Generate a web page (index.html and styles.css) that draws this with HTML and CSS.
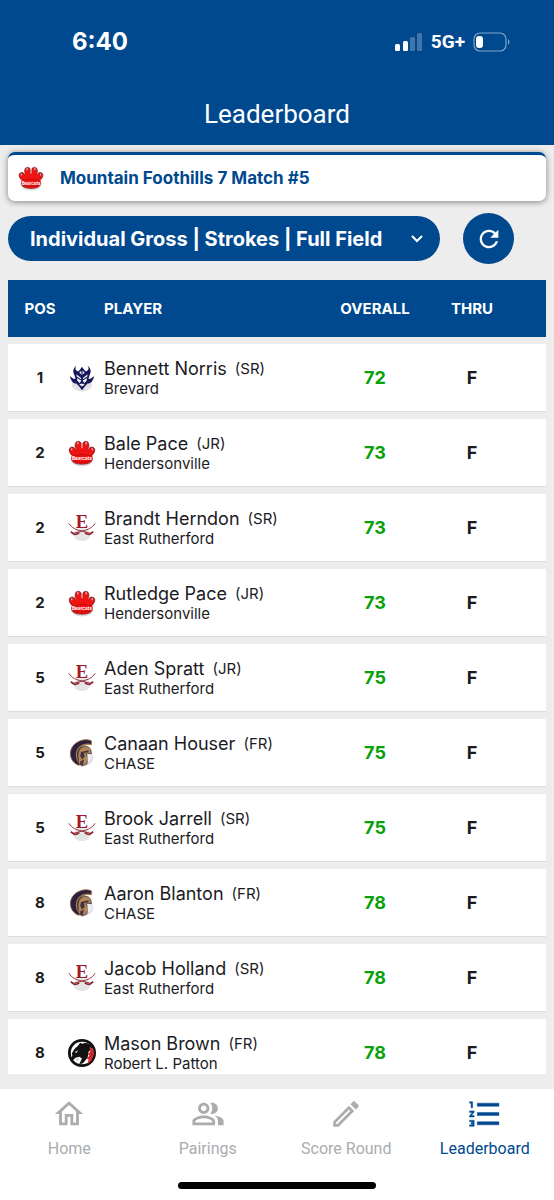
FILE: index.html
```html
<!DOCTYPE html>
<html lang="en">
<head>
    <meta charset="UTF-8">
    <meta name="viewport" content="width=device-width, initial-scale=1.0">
    <title>Leaderboard</title>
    <link rel="stylesheet" href="styles.css">
</head>
<body>
    <!-- team logos -->
    <svg class="sprite" aria-hidden="true">
        <symbol id="bearcats" viewBox="0 0 30 30">
            <ellipse cx="15" cy="22" rx="12" ry="7.500" fill="#dcdcde"/>
            <g fill="#f01313" stroke="#5a2020" stroke-width=".7">
                <ellipse cx="5" cy="13" rx="3.400" ry="4.500" transform="rotate(-20 5 13)"/>
                <ellipse cx="11" cy="7" rx="3.400" ry="4.500"/>
                <ellipse cx="19" cy="7" rx="3.400" ry="4.500"/>
                <ellipse cx="25" cy="13" rx="3.400" ry="4.500" transform="rotate(20 25 13)"/>
            </g>
            <path fill="#f01313" d="M15 6c5 0 7 4 8 8 3 2 4 5 3 8-1 4-6 5-11 5S5 26 4 22c-1-3 0-6 3-8 1-4 3-8 8-8z"/>
            <path d="M4 20c-1 5 4 7 11 7s12-2 11-7" fill="none" stroke="#7a1515" stroke-width=".7"/>
            <path d="M10.500 3v3M15 5v5M19.500 3v3M4 10v2M26 10v2" stroke="#cfc2c2" stroke-width="1.300"/>
            <path d="M5 18q10-3 20 0M6 24q9 2 18 0" fill="none" stroke="#a30b0b" stroke-width=".7"/>
            <text x="15" y="22.500" class="paw-text">Bearcats</text>
        </symbol>
        <symbol id="devils" viewBox="0 0 30 30">
            <ellipse cx="15" cy="22" rx="11" ry="7.500" fill="#e2e2e4"/>
            <path fill="#161657" d="M9 2c-2 3-1 5 2 6l2-2 2-3 2 3 2 2c3-1 4-3 2-6 4 3 4 7 2 10l-1 4c3 0 4-2 6-3-1 4-3 8-7 8l-3 3-3 4-3-4-3-3c-4 0-6-4-7-8 2 1 3 3 6 3l-1-4C5 9 5 5 9 2z"/>
            <path fill="#eceef8" d="M9 11l5 4v3l-1 3-3-3zM21 11l-5 4v3l1 3 3-3zM12 9l3-2 3 2-3 3zM12 22l3-1 3 1-3 2z"/>
            <path fill="none" stroke="#161657" stroke-width="1.200" d="M9 14l5 3M21 14l-5 3M15 7v5M13 20h4"/>
        </symbol>
        <symbol id="cavaliers" viewBox="0 0 30 30">
            <ellipse cx="15" cy="22" rx="9" ry="7" fill="#e4e4e5"/>
            <g fill="none" stroke="#8e2430">
                <path d="M1 10c3 5 8 7 13 8l11 3" stroke-width="1"/>
                <path d="M29 10c-3 5-8 7-13 8L5 21" stroke-width="1"/>
                <path d="M3 19l4 3q3 0 5-2M27 19l-4 3q-3 0-5-2" stroke-width="1.800"/>
            </g>
            <text x="15" y="15" class="cav-text">E</text>
        </symbol>
        <symbol id="trojans" viewBox="0 0 30 30">
            <ellipse cx="18" cy="20" rx="9" ry="8" fill="#dcdce3"/>
            <path fill="#2d1d3f" stroke="#8b693e" stroke-width="1" d="M25 2C19-1 9 2 5 8 0 15 3 25 11 28l3-1c-4-5-4-10-2-15 2-4 6-7 13-6z"/>
            <path fill="none" stroke="#a5804c" stroke-width="1.300" d="M25 6C15 4 9 10 9 17q0 6 4 10"/>
            <path fill="#b18a56" stroke="#382632" stroke-width=".8" d="M11 20c-1-7 2-12 8-12 4 0 6 3 6 8l-5-1v3l2 1-2 8-5 2-4-3z"/>
            <path fill="#463142" d="M14 14l8-2v2l-5 1 1 4-3 3-2-4zM13 24l4-2-1 6-3-1z"/>
            <path fill="#ececf2" d="M21 17l4-1 1 4-3 5-2-1z"/>
        </symbol>
        <symbol id="panthers" viewBox="0 0 30 30">
            <circle cx="15" cy="15" r="15" fill="#111"/>
            <circle cx="15" cy="15" r="12" fill="#fff"/>
            <path fill="#111" d="M4 16c1-3 3-6 6-8l3-4 2 1c5-2 9 0 11 4l-4 5-1 6-5 6-4 1 3-6-3-2-4 1-3 3-2-3c2-1 2-3 1-4z"/>
            <path fill="#d8d8d8" d="M7 14l4-2-2 3zM8 22l3-2 1 2-2 2z"/>
            <path fill="#e22b30" d="M23 8l4 3 1 5-3 7-4 4 1-5-2-1 3-3-2-2 3-2z"/>
            <path fill="none" stroke="#901e21" stroke-width="1" d="M25 12l-1 3 2 1-3 4 1 1"/>
        </symbol>
    </svg>

    <div class="app">
        <header class="header">
            <div class="status-bar">
                <span class="time">6:40</span>
                <div class="status-icons">
                    <svg width="28" height="20" viewBox="0 0 28 20" fill="#fff">
                        <rect x="0" y="12" width="5" height="7" rx="1.500"/>
                        <rect x="8" y="9" width="5" height="10" rx="1.500"/>
                        <rect x="15" y="5" width="5" height="14" rx="1.500" opacity=".25"/>
                        <rect x="22" y="1" width="5" height="18" rx="1.500" opacity=".25"/>
                    </svg>
                    <span class="network">5G+</span>
                    <svg width="37" height="20" viewBox="0 0 37 20">
                        <rect x="1" y="1" width="32" height="18" rx="6" fill="none" stroke="#7fa3cb" stroke-width="1.200"/>
                        <rect x="3" y="4" width="7" height="12" rx="3" fill="#fff"/>
                        <path d="M35 7q3 3 0 6z" fill="#7fa3cb"/>
                    </svg>
                </div>
            </div>
            <h1 class="title">Leaderboard</h1>
        </header>

        <main class="content">
            <div class="match-card">
                <svg class="match-logo"><use href="#bearcats"/></svg>
                <h2 class="match-name">Mountain Foothills 7 Match #5</h2>
            </div>

            <div class="controls">
                <div class="filter">
                    <select aria-label="Leaderboard type">
                        <option>Individual Gross | Strokes | Full Field</option>
                    </select>
                    <svg class="chevron" width="12" height="8" viewBox="0 0 12 8" fill="none" stroke="#fff" stroke-width="2"><path d="M1 1l5 5 5-5"/></svg>
                </div>
                <button class="refresh" aria-label="Refresh">
                    <svg width="28" height="28" viewBox="0 0 24 24" fill="#fff"><path d="M17.650 6.350C16.200 4.900 14.210 4 12 4c-4.420 0-7.990 3.580-7.990 8s3.570 8 7.990 8c3.730 0 6.840-2.550 7.730-6h-2.080c-.82 2.330-3.040 4-5.650 4-3.310 0-6-2.690-6-6s2.690-6 6-6c1.660 0 3.140.69 4.220 1.780L13 11h7V4l-2.350 2.350z"/></svg>
                </button>
            </div>

            <div class="board">
                <table>
                    <thead>
                        <tr>
                            <th class="pos">POS</th>
                            <th class="logo"></th>
                            <th class="player">PLAYER</th>
                            <th class="overall">OVERALL</th>
                            <th class="thru">THRU</th>
                            <th class="end"></th>
                        </tr>
                    </thead>
                    <tbody>
                        <tr>
                            <td class="pos">1</td>
                            <td class="logo"><svg><use href="#devils"/></svg></td>
                            <td class="player"><div class="name">Bennett Norris <span>(SR)</span></div><div class="school">Brevard</div></td>
                            <td class="overall">72</td>
                            <td class="thru">F</td>
                            <td class="end"></td>
                        </tr>
                        <tr>
                            <td class="pos">2</td>
                            <td class="logo"><svg><use href="#bearcats"/></svg></td>
                            <td class="player"><div class="name">Bale Pace <span>(JR)</span></div><div class="school">Hendersonville</div></td>
                            <td class="overall">73</td>
                            <td class="thru">F</td>
                            <td class="end"></td>
                        </tr>
                        <tr>
                            <td class="pos">2</td>
                            <td class="logo"><svg><use href="#cavaliers"/></svg></td>
                            <td class="player"><div class="name">Brandt Herndon <span>(SR)</span></div><div class="school">East Rutherford</div></td>
                            <td class="overall">73</td>
                            <td class="thru">F</td>
                            <td class="end"></td>
                        </tr>
                        <tr>
                            <td class="pos">2</td>
                            <td class="logo"><svg><use href="#bearcats"/></svg></td>
                            <td class="player"><div class="name">Rutledge Pace <span>(JR)</span></div><div class="school">Hendersonville</div></td>
                            <td class="overall">73</td>
                            <td class="thru">F</td>
                            <td class="end"></td>
                        </tr>
                        <tr>
                            <td class="pos">5</td>
                            <td class="logo"><svg><use href="#cavaliers"/></svg></td>
                            <td class="player"><div class="name">Aden Spratt <span>(JR)</span></div><div class="school">East Rutherford</div></td>
                            <td class="overall">75</td>
                            <td class="thru">F</td>
                            <td class="end"></td>
                        </tr>
                        <tr>
                            <td class="pos">5</td>
                            <td class="logo"><svg><use href="#trojans"/></svg></td>
                            <td class="player"><div class="name">Canaan Houser <span>(FR)</span></div><div class="school">CHASE</div></td>
                            <td class="overall">75</td>
                            <td class="thru">F</td>
                            <td class="end"></td>
                        </tr>
                        <tr>
                            <td class="pos">5</td>
                            <td class="logo"><svg><use href="#cavaliers"/></svg></td>
                            <td class="player"><div class="name">Brook Jarrell <span>(SR)</span></div><div class="school">East Rutherford</div></td>
                            <td class="overall">75</td>
                            <td class="thru">F</td>
                            <td class="end"></td>
                        </tr>
                        <tr>
                            <td class="pos">8</td>
                            <td class="logo"><svg><use href="#trojans"/></svg></td>
                            <td class="player"><div class="name">Aaron Blanton <span>(FR)</span></div><div class="school">CHASE</div></td>
                            <td class="overall">78</td>
                            <td class="thru">F</td>
                            <td class="end"></td>
                        </tr>
                        <tr>
                            <td class="pos">8</td>
                            <td class="logo"><svg><use href="#cavaliers"/></svg></td>
                            <td class="player"><div class="name">Jacob Holland <span>(SR)</span></div><div class="school">East Rutherford</div></td>
                            <td class="overall">78</td>
                            <td class="thru">F</td>
                            <td class="end"></td>
                        </tr>
                        <tr>
                            <td class="pos">8</td>
                            <td class="logo"><svg><use href="#panthers"/></svg></td>
                            <td class="player"><div class="name">Mason Brown <span>(FR)</span></div><div class="school">Robert L. Patton</div></td>
                            <td class="overall">78</td>
                            <td class="thru">F</td>
                            <td class="end"></td>
                        </tr>
                    </tbody>
                </table>
            </div>
        </main>

        <footer class="footer">
            <nav class="tabs">
                <a href="#home">
                    <svg viewBox="0 0 24 24"><path d="M12 5.690l5 4.500V18h-2v-6H9v6H7v-7.810l5-4.500M12 3L2 12h3v8h6v-6h2v6h6v-8h3L12 3z"/></svg>
                    Home
                </a>
                <a href="#pairings">
                    <svg viewBox="0 0 24 24"><path d="M16.670 13.130C18.040 14.060 19 15.320 19 17v3h4v-3c0-2.180-3.570-3.470-6.330-3.870zM15 12c2.210 0 4-1.790 4-4s-1.790-4-4-4c-.47 0-.91.1-1.330.24C14.500 5.270 15 6.580 15 8s-.5 2.730-1.330 3.760c.42.14.86.24 1.330.24zM9 12c2.210 0 4-1.790 4-4s-1.790-4-4-4-4 1.790-4 4 1.790 4 4 4zm0-6c1.100 0 2 .9 2 2s-.9 2-2 2-2-.9-2-2 .9-2 2-2zm0 7c-2.670 0-8 1.340-8 4v3h16v-3c0-2.660-5.330-4-8-4zm6 5H3v-.99C3.200 16.290 6.300 15 9 15s5.800 1.290 6 2v1z"/></svg>
                    Pairings
                </a>
                <a href="#score">
                    <svg viewBox="0 0 24 24"><path d="M14.060 9.020l.92.92L5.920 19H5v-.92l9.060-9.060M17.660 3c-.25 0-.51.1-.7.29l-1.830 1.830 3.750 3.750 1.830-1.830c.39-.39.39-1.020 0-1.410l-2.340-2.340c-.2-.2-.45-.29-.71-.29zm-3.600 3.190L3 17.250V21h3.750L17.810 9.940l-3.750-3.750z"/></svg>
                    Score Round
                </a>
                <a href="#leaderboard" class="active">
                    <svg viewBox="1 1 22 22"><path stroke="currentColor" stroke-width=".3" d="M2 17h2v.5H3v1h1v.5H2v1h3v-4H2v1zm1-9h1V4H2v1h1v3zm-1 3h1.800L2 13.100v.9h3v-1H3.200L5 10.900V10H2v1zm5-6v2h14V5H7zm0 14h14v-2H7v2zm0-6h14v-2H7v2z"/></svg>
                    Leaderboard
                </a>
            </nav>
            <div class="home-bar"></div>
        </footer>
    </div>
</body>
</html>
```
FILE: styles.css
```css
* {
    box-sizing: border-box;
}
body {
    margin: 0;
    background: #ededed;
    color: #1b1b1f;
    font-family: Inter, "Liberation Sans", sans-serif;
}
.sprite {
    display: none;
}
.paw-text {
    font-size: 5px;
    font-weight: bold;
    text-anchor: middle;
    fill: #fff;
}
.cav-text {
    font-family: "Liberation Serif", serif;
    font-size: 20px;
    font-weight: bold;
    text-anchor: middle;
    fill: #a01c28;
}
.app {
    display: flex;
    flex-direction: column;
    height: 100vh;
}

/* header */
.header {
    flex: none;
    padding-bottom: 15px;
    background: #00498f;
    color: #fff;
}
.status-bar {
    display: flex;
    align-items: center;
    justify-content: space-between;
    height: 83px;
    padding: 0 44px 0 72px;
}
.time {
    font-size: 24px;
    font-weight: 700;
}
.status-icons {
    display: flex;
    align-items: center;
    gap: 8px;
}
.network {
    font-family: Roboto, sans-serif;
    font-size: 19px;
    font-weight: 700;
}
.title {
    margin: 16px 0 0;
    font-family: Roboto, sans-serif;
    font-size: 26px;
    font-weight: 400;
    line-height: 31px;
    text-align: center;
}

/* match + filter */
.content {
    display: flex;
    flex: 1;
    flex-direction: column;
    min-height: 0;
    padding: 7px 8px 15px;
}
.match-card {
    display: flex;
    flex: none;
    align-items: center;
    gap: 16px;
    height: 49px;
    padding: 0 10px;
    background: #fff;
    border-top: 3px solid #00498f;
    border-radius: 7px;
    box-shadow: 0 1px 6px rgba(0, 0, 0, 0.45);
}
.match-logo {
    width: 26px;
    height: 28px;
}
.match-name {
    margin: 0;
    color: #00498f;
    font-size: 17px;
    font-weight: 700;
}
.controls {
    display: flex;
    flex: none;
    align-items: center;
    gap: 23px;
    margin: 12px 32px 16px 0;
}
.filter {
    display: grid;
    flex: 1;
    align-items: center;
}
.filter select,
.chevron {
    grid-area: 1 / 1;
}
.filter select {
    width: 100%;
    height: 45px;
    padding: 0 40px 0 22px;
    appearance: none;
    background: #00498f;
    border: none;
    border-radius: 23px;
    color: #fff;
    font-family: inherit;
    font-size: 20px;
    font-weight: 700;
}
.chevron {
    justify-self: end;
    margin-right: 17px;
    pointer-events: none;
}
.refresh {
    display: grid;
    place-items: center;
    width: 51px;
    height: 51px;
    padding: 0;
    background: #00498f;
    border: none;
    border-radius: 50%;
    cursor: pointer;
}

/* leaderboard */
.board {
    flex: 1;
    min-height: 0;
    overflow-y: auto;
    scrollbar-width: none;
}
table {
    width: 100%;
    margin-top: -7px;
    border-spacing: 0 7px;
    table-layout: fixed;
}
th {
    height: 57px;
    padding: 0;
    background: #00498f;
    color: #fff;
    font-size: 15px;
    font-weight: 700;
}
td {
    height: 68px;
    padding: 0;
    background: #fff;
    border-bottom: 1px solid #dcdcdc;
    text-align: center;
}
.pos {
    width: 60px;
    padding-left: 4px;
}
td.pos {
    font-size: 15px;
    font-weight: 700;
}
.logo {
    width: 36px;
}
.logo svg {
    display: block;
    width: 28px;
    height: 28px;
}
.player {
    text-align: left;
}
.name {
    font-size: 18px;
    font-weight: 400;
    line-height: 22px;
}
.name span {
    margin-left: 3px;
    font-size: 15px;
    vertical-align: 1px;
}
.school {
    font-size: 15px;
    line-height: 18px;
}
.overall {
    width: 98px;
}
td.overall,
td.thru {
    font-size: 18px;
    font-weight: 700;
}
td.overall {
    color: #08a10b;
}
.thru {
    width: 96px;
}
.end {
    width: 26px;
}

/* bottom tabs */
.footer {
    flex: none;
    padding: 8px 0 11px;
    background: #fff;
}
.tabs {
    display: grid;
    grid-template-columns: repeat(4, 1fr);
}
.tabs a {
    display: flex;
    flex-direction: column;
    align-items: center;
    gap: 8px;
    color: #aaacae;
    font-family: Roboto, sans-serif;
    font-size: 16px;
    line-height: 19px;
    text-decoration: none;
}
.tabs svg {
    width: 34px;
    height: 34px;
    fill: currentColor;
}
.tabs .active {
    color: #00498f;
}
.home-bar {
    width: 198px;
    height: 7px;
    margin: 24px auto 0;
    background: #000;
    border-radius: 4px;
}
```
